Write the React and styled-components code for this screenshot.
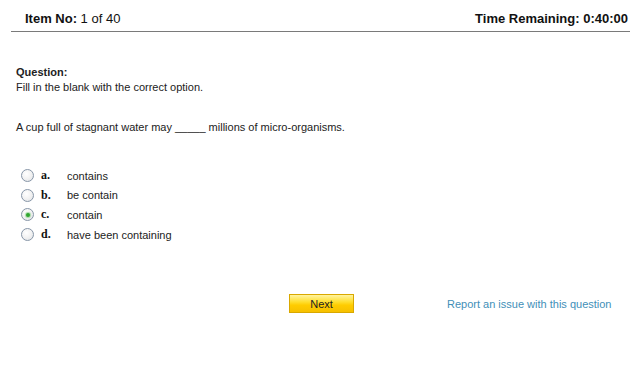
import React from "react";
import styled, { createGlobalStyle } from "styled-components";

const Global = createGlobalStyle`
  html, body { margin: 0; padding: 0; background: #fff; }
  body { font-family: "Liberation Sans", Arial, sans-serif; color: #222; }
`;

const Page = styled.div`
  width: 640px;
  height: 365px;
  display: flex;
  flex-direction: column;
`;

const Header = styled.header`
  margin: 0 10px 0 11px;
  height: 32px;
  box-sizing: border-box;
  padding: 0 2px 5px 14px;
  border-bottom: 1px solid #7a7a7a;
  display: flex;
  justify-content: space-between;
  align-items: flex-end;
  font-size: 13px;
  color: #111;
`;

const Bold = styled.span`
  font-weight: bold;
`;

const Content = styled.main`
  padding: 33px 0 0 16px;
  font-size: 11px;
  color: #222;
  display: flex;
  flex-direction: column;
`;

const Label = styled.div`
  font-weight: bold;
  line-height: 15px;
`;

const Line = styled.div`
  line-height: 15px;
  margin-top: ${(p) => p.$mt || 0}px;
`;

const Options = styled.ul`
  list-style: none;
  margin: 31px 0 0 5px;
  padding: 0;
  display: flex;
  flex-direction: column;
`;

const Option = styled.li`
  display: flex;
  align-items: center;
  height: 19.6px;
`;

const Radio = styled.span`
  width: 11px;
  height: 11px;
  border-radius: 50%;
  border: 1px solid #8796a8;
  background: radial-gradient(circle at 40% 35%, #ffffff 0%, #f2f2f2 50%, #dcdfe3 100%);
  display: flex;
  align-items: center;
  justify-content: center;
  flex: none;
  &::after {
    content: "";
    width: 4px;
    height: 4px;
    border-radius: 50%;
    background: ${(p) => (p.$checked ? "#2fa52f" : "transparent")};
    box-shadow: ${(p) => (p.$checked ? "0 0 1px 1px rgba(90,190,90,0.5)" : "none")};
  }
`;

const Letter = styled.span`
  font-family: "Liberation Serif", "Times New Roman", serif;
  font-weight: bold;
  font-size: 12px;
  width: 26px;
  margin-left: 7px;
  color: #111;
`;

const OptText = styled.span`
  font-size: 11px;
  color: #222;
`;

const Footer = styled.div`
  margin-top: 50px;
  display: flex;
  align-items: center;
  padding-left: 273px;
`;

const NextButton = styled.button`
  width: 65px;
  height: 19px;
  border: 1px solid #d9a800;
  background: linear-gradient(to bottom, #fff3a0 0%, #ffdf30 40%, #ffcc00 60%, #f6c000 100%);
  font-family: "Liberation Sans", Arial, sans-serif;
  font-size: 11px;
  color: #222;
  padding: 0;
  cursor: pointer;
`;

const ReportLink = styled.a`
  margin-left: 93px;
  font-size: 11px;
  color: #3f8fb8;
  text-decoration: none;
  cursor: pointer;
`;

const options = [
  { l: "a.", t: "contains" },
  { l: "b.", t: "be contain" },
  { l: "c.", t: "contain", checked: true },
  { l: "d.", t: "have been containing" },
];

export default function App() {
  return (
    <Page>
      <Global />
      <Header>
        <span>
          <Bold>Item No:</Bold> 1 of 40
        </span>
        <Bold>Time Remaining: 0:40:00</Bold>
      </Header>
      <Content>
        <Label>Question:</Label>
        <Line>Fill in the blank with the correct option.</Line>
        <Line $mt={25}>A cup full of stagnant water may _____ millions of micro-organisms.</Line>
        <Options>
          {options.map((o) => (
            <Option key={o.l}>
              <Radio $checked={o.checked} />
              <Letter>{o.l}</Letter>
              <OptText>{o.t}</OptText>
            </Option>
          ))}
        </Options>
        <Footer>
          <NextButton>Next</NextButton>
          <ReportLink>Report an issue with this question</ReportLink>
        </Footer>
      </Content>
    </Page>
  );
}
